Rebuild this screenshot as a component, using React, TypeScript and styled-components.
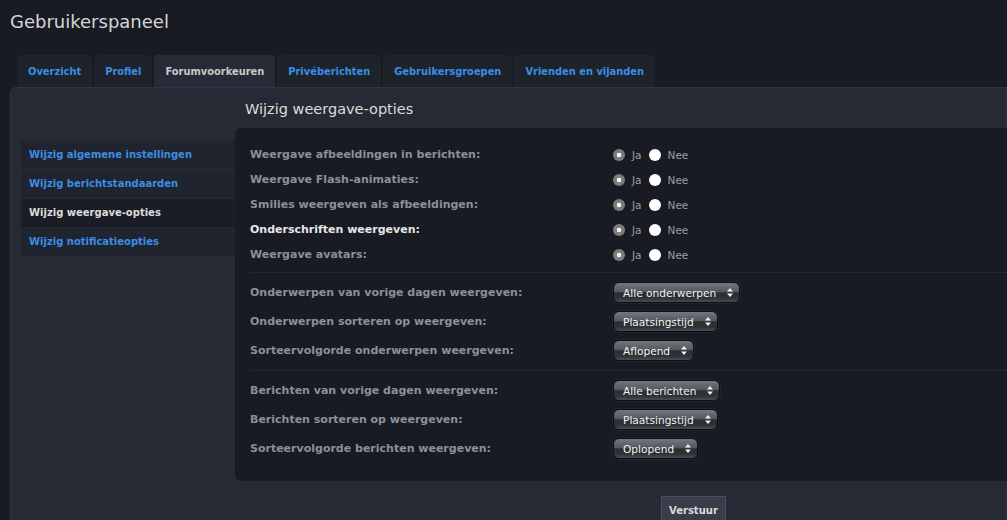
import React from "react";
import styled, { createGlobalStyle } from "styled-components";

const GlobalStyle = createGlobalStyle`
  html, body {
    margin: 0;
    padding: 0;
    background: #181b23;
    overflow: hidden;
    font-family: "DejaVu Sans", Verdana, sans-serif;
  }
`;

type Tab = { label: string; active?: boolean };
type NavItem = { label: string; active?: boolean };

const tabs: Tab[] = [
  { label: "Overzicht" },
  { label: "Profiel" },
  { label: "Forumvoorkeuren", active: true },
  { label: "Privéberichten" },
  { label: "Gebruikersgroepen" },
  { label: "Vrienden en vijanden" },
];

const navItems: NavItem[] = [
  { label: "Wijzig algemene instellingen" },
  { label: "Wijzig berichtstandaarden" },
  { label: "Wijzig weergave-opties", active: true },
  { label: "Wijzig notificatieopties" },
];

const radioRows = [
  { label: "Weergave afbeeldingen in berichten:" },
  { label: "Weergave Flash-animaties:" },
  { label: "Smilies weergeven als afbeeldingen:" },
  { label: "Onderschriften weergeven:", highlight: true },
  { label: "Weergave avatars:" },
];

const topicRows = [
  { label: "Onderwerpen van vorige dagen weergeven:", value: "Alle onderwerpen" },
  { label: "Onderwerpen sorteren op weergeven:", value: "Plaatsingstijd" },
  { label: "Sorteervolgorde onderwerpen weergeven:", value: "Aflopend" },
];

const postRows = [
  { label: "Berichten van vorige dagen weergeven:", value: "Alle berichten" },
  { label: "Berichten sorteren op weergeven:", value: "Plaatsingstijd" },
  { label: "Sorteervolgorde berichten weergeven:", value: "Oplopend" },
];

const SelectArrows = () => (
  <svg width="6" height="9" viewBox="0 0 6 9">
    <path d="M3 0 L6 3.5 L0 3.5 Z" fill="#f0f0f0" />
    <path d="M0 5.5 L6 5.5 L3 9 Z" fill="#f0f0f0" />
  </svg>
);

const App: React.FC = () => {
  return (
    <>
      <GlobalStyle />
      <StPage>
        <StTitle>Gebruikerspaneel</StTitle>
        <StTabs>
          {tabs.map((tab) => (
            <StTab key={tab.label} $active={tab.active}>
              {tab.label}
            </StTab>
          ))}
        </StTabs>
        <StPanel>
          <StNav>
            {navItems.map((item) => (
              <StNavItem key={item.label} $active={item.active}>
                {item.label}
              </StNavItem>
            ))}
          </StNav>
          <StMain>
            <StHeading>Wijzig weergave-opties</StHeading>
            <StBox>
              {radioRows.map((row) => (
                <StRow key={row.label} $tall={false}>
                  <StLabel $highlight={row.highlight}>{row.label}</StLabel>
                  <StChoices>
                    <StRadio $checked />
                    <StChoiceText>Ja</StChoiceText>
                    <StRadio $checked={false} />
                    <StChoiceText>Nee</StChoiceText>
                  </StChoices>
                </StRow>
              ))}
              <StDivider />
              {topicRows.map((row) => (
                <StRow key={row.label} $tall>
                  <StLabel>{row.label}</StLabel>
                  <div>
                    <StSelect>
                      {row.value}
                      <SelectArrows />
                    </StSelect>
                  </div>
                </StRow>
              ))}
              <StDivider />
              {postRows.map((row) => (
                <StRow key={row.label} $tall>
                  <StLabel>{row.label}</StLabel>
                  <div>
                    <StSelect>
                      {row.value}
                      <SelectArrows />
                    </StSelect>
                  </div>
                </StRow>
              ))}
            </StBox>
            <StSubmitBar>
              <StSubmit>Verstuur</StSubmit>
            </StSubmitBar>
          </StMain>
        </StPanel>
      </StPage>
    </>
  );
};

const StPage = styled.div`
  padding: 11px 0 0 10px;
  height: 520px;
  box-sizing: border-box;
  display: flex;
  flex-direction: column;
`;

const StTitle = styled.h1`
  margin: 0;
  font-size: 18px;
  line-height: 22px;
  font-weight: normal;
  color: #d6d6d6;
`;

const StTabs = styled.ul`
  list-style: none;
  margin: 22px 0 0 7px;
  padding: 0;
  display: flex;
  gap: 2px;
`;

const StTab = styled.li<{ $active?: boolean }>`
  height: 32px;
  line-height: 34px;
  padding: 0 11px;
  border-radius: 4px 4px 0 0;
  font-size: 9.9px;
  font-weight: bold;
  background: ${(p) => (p.$active ? "#262b37" : "#1e222b")};
  color: ${(p) => (p.$active ? "#c8c8c8" : "#3a8ee6")};
`;

const StPanel = styled.div`
  flex: 1;
  display: flex;
  background: #252a35;
  border: 1px solid #2f3441;
  border-bottom: none;
  border-radius: 6px 0 0 0;
  padding-left: 10px;
`;

const StNav = styled.ul`
  list-style: none;
  margin: 53px 0 0;
  padding: 0;
  width: 214px;
  flex-shrink: 0;
`;

const StNavItem = styled.li<{ $active?: boolean }>`
  height: 28px;
  line-height: 28px;
  padding-left: 8px;
  font-size: 10px;
  font-weight: bold;
  border-bottom: 1px solid #262a35;
  background: ${(p) => (p.$active ? "#1a1d25" : "#20242e")};
  color: ${(p) => (p.$active ? "#dcdcdc" : "#3a8ee6")};
`;

const StMain = styled.div`
  flex: 1;
  display: flex;
  flex-direction: column;
  margin-right: -1px;
`;

const StHeading = styled.h2`
  margin: 0 0 9px;
  padding: 11px 10px 0;
  font-size: 14.5px;
  line-height: 20px;
  font-weight: normal;
  color: #dcdcdc;
`;

const StBox = styled.div`
  background: #181b23;
  border-radius: 6px 0 0 6px;
  padding: 14px 0 18px 15px;
`;

const StRow = styled.div<{ $tall: boolean }>`
  display: grid;
  grid-template-columns: 363px 1fr;
  align-items: center;
  height: ${(p) => (p.$tall ? "29px" : "25px")};
`;

const StLabel = styled.span<{ $highlight?: boolean }>`
  font-size: 11px;
  font-weight: bold;
  color: ${(p) => (p.$highlight ? "#e6e6e6" : "#8b9099")};
`;

const StChoices = styled.div`
  display: flex;
  align-items: center;
`;

const StRadio = styled.span<{ $checked: boolean }>`
  width: 12px;
  height: 12px;
  border-radius: 50%;
  margin-right: 7px;
  background: ${(p) =>
    p.$checked
      ? "radial-gradient(circle, #f4f4f4 0 2px, #7c7c7c 2.6px)"
      : "#ffffff"};
`;

const StChoiceText = styled.span`
  font-size: 10.5px;
  color: #9a9ea6;
  margin-right: 7px;
`;

const StSelect = styled.span`
  display: inline-flex;
  align-items: center;
  gap: 11px;
  height: 19px;
  padding: 0 6px 0 9px;
  border-radius: 6px;
  border: 1px solid #0c0e12;
  font-size: 10.6px;
  color: #f2f2f2;
  background: linear-gradient(
    #74777d 0%,
    #55585e 45%,
    #2b2e33 52%,
    #2f3237 80%,
    #4a4d53 100%
  );
  box-shadow: 0 0 0 1px #22252b;
`;

const StDivider = styled.div`
  height: 1px;
  background: #232730;
  margin: 5px 0;
`;

const StSubmitBar = styled.div`
  padding: 15px 0 0 426px;
`;

const StSubmit = styled.button`
  height: 28px;
  padding: 0 7px;
  background: #383d49;
  border: 1px solid #4a4f5b;
  border-bottom: none;
  color: #dcdcdc;
  font-family: "DejaVu Sans", Verdana, sans-serif;
  font-size: 10px;
  font-weight: bold;
`;

export default App;
